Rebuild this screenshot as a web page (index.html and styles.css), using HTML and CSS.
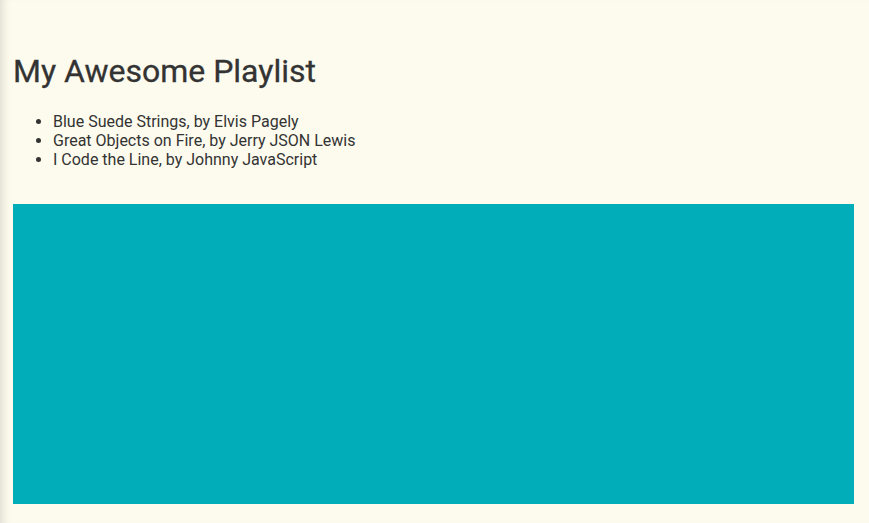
FILE: index.html
```html
<!DOCTYPE html>
<html>
<head>
<meta charset="utf-8">
<link rel="stylesheet" href="styles.css">
</head>
<body>
<div class="page">
  <h1 class="title">My Awesome Playlist</h1>
  <ul class="songs">
    <li>Blue Suede Strings, by Elvis Pagely</li>
    <li>Great Objects on Fire, by Jerry JSON Lewis</li>
    <li>I Code the Line, by Johnny JavaScript</li>
  </ul>
  <div class="stage"></div>
</div>
</body>
</html>
```
FILE: styles.css
```css
html, body {
  margin: 0;
  height: 100%;
}
body {
  background: #fdfbee;
  box-shadow: inset 9px 0 8px -6px rgba(0,0,0,0.12);
  font-family: Roboto, "Liberation Sans", sans-serif;
  color: #333;
}
.page {
  padding: 32px 15px 0 13px;
}
.title {
  font-size: 32px;
  font-weight: 400;
  -webkit-text-stroke: 0.3px #333;
  margin: 21px 0 22px;
  line-height: 37px;
}
.songs {
  margin: 0;
  padding-left: 40px;
  font-size: 16px;
  line-height: 19px;
}
.stage {
  margin-top: 35px;
  height: 300px;
  background: #00adb9;
}
```
